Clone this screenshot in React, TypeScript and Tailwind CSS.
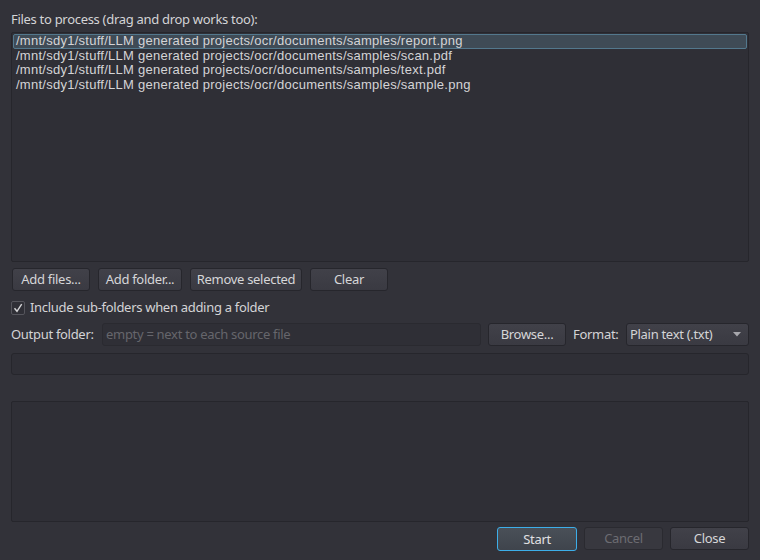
import React from 'react';

const files = [
  '/mnt/sdy1/stuff/LLM generated projects/ocr/documents/samples/report.png',
  '/mnt/sdy1/stuff/LLM generated projects/ocr/documents/samples/scan.pdf',
  '/mnt/sdy1/stuff/LLM generated projects/ocr/documents/samples/text.pdf',
  '/mnt/sdy1/stuff/LLM generated projects/ocr/documents/samples/sample.png',
];

const btn =
  'h-[23px] rounded-[3px] border border-[#26262c] bg-gradient-to-b from-[#414149] to-[#3a3a42] text-[#d6d6d8] leading-none';

export default function App() {
  return (
    <div
      className="w-[760px] h-[560px] bg-[#323239] text-[13px] tracking-[-0.3px] text-[#d4d4d6] flex flex-col px-[11px] pt-[10px]"
      style={{ fontFamily: '"Noto Sans", "Open Sans", sans-serif' }}
    >
      {/* files list */}
      <div className="h-[18px] leading-[18px]">Files to process (drag and drop works too):</div>
      <div className="mt-[4px] h-[230px] border border-[#26262c] bg-[#2f2f36] rounded-[2px] p-[1px]">
        {files.map((f, i) => (
          <div
            key={f}
            className={
              'h-[14.67px] leading-[12.6px] px-[2px] whitespace-nowrap tracking-[0.26px] font-["Liberation_Sans",sans-serif] ' +
              (i === 0 ? 'bg-[#3f4b56] border border-[#53788d] rounded-[2px]' : 'border border-transparent')
            }
          >
            {f}
          </div>
        ))}
      </div>

      <div className="flex gap-[8px] mt-[6px] pl-[1px]">
        <button className={btn + ' w-[78px]'}>Add files...</button>
        <button className={btn + ' w-[84px]'}>Add folder...</button>
        <button className={btn + ' w-[112px]'}>Remove selected</button>
        <button className={btn + ' w-[78px]'}>Clear</button>
      </div>

      <div className="flex items-center gap-[5px] mt-[9px] h-[16px]">
        <div className="w-[14px] h-[14px] border border-[#55555c] bg-[#2f2f36] rounded-[2px] flex items-center justify-center">
          <svg width="10" height="10" viewBox="0 0 10 10">
            <path d="M1.5 5.2 L4 8.3 L8.7 1.2" fill="none" stroke="#d6d6d8" strokeWidth="1.4" />
          </svg>
        </div>
        <span>Include sub-folders when adding a folder</span>
      </div>

      {/* output row */}
      <div className="flex items-center mt-[7px] h-[23px]">
        <span className="w-[91px] shrink-0">Output folder:</span>
        <div className="w-[379px] h-[23px] border border-[#2a2a30] bg-[#2f2f36] rounded-[3px] flex items-center px-[3px] text-[#66666c]">
          empty = next to each source file
        </div>
        <button className={btn + ' w-[78px] ml-[7px]'}>Browse...</button>
        <span className="ml-[7px] w-[53px] shrink-0">Format:</span>
        <div className="flex-1 h-[23px] border border-[#26262c] bg-gradient-to-b from-[#414149] to-[#3a3a42] rounded-[3px] flex items-center pl-[3px] pr-[7px]">
          <span className="flex-1">Plain text (.txt)</span>
          <svg width="8" height="5" viewBox="0 0 8 5">
            <path d="M0 0 H8 L4 4.5 Z" fill="#a8a8ad" />
          </svg>
        </div>
      </div>

      {/* progress */}
      <div className="mt-[7px] h-[22px] border border-[#26262c] bg-[#2f2f36] rounded-[3px]" />

      {/* log */}
      <div className="mt-[26px] h-[121px] border border-[#26262c] bg-[#2f2f36] rounded-[2px]" />

      <div className="flex justify-end gap-[7px] mt-[5px]">
        <button className="w-[80px] h-[24px] rounded-[3px] border border-[#3daee9] bg-gradient-to-b from-[#4a5058] to-[#3f444c] text-[#e0e0e2] leading-none">
          Start
        </button>
        <button className="w-[79px] h-[23px] rounded-[3px] border border-[#2a2a30] bg-[#38383f] text-[#6c6c72] leading-none">
          Cancel
        </button>
        <button className={btn + ' w-[79px]'}>Close</button>
      </div>
    </div>
  );
}
